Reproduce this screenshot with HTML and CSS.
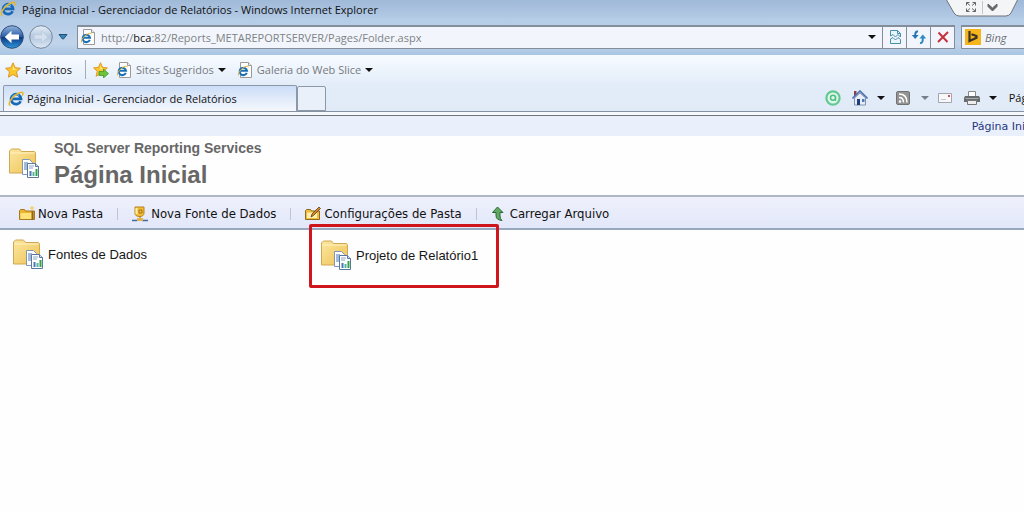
FILE: index.html
```html
<!DOCTYPE html>
<html lang="pt-BR">
<head>
<meta charset="utf-8">
<title>Página Inicial - Gerenciador de Relatórios</title>
<link rel="stylesheet" href="styles.css">
</head>
<body>
<svg class="defs" aria-hidden="true">
  <defs>
    <linearGradient id="gold" x1="0" y1="0" x2="1" y2="1"><stop offset="0" stop-color="#fbe7a0"/><stop offset="1" stop-color="#eec255"/></linearGradient>
    <linearGradient id="nav" x1="0" y1="0" x2="0" y2="1"><stop offset="0" stop-color="#93b5dd"/><stop offset=".48" stop-color="#2c5ea8"/><stop offset=".5" stop-color="#0b3580"/><stop offset="1" stop-color="#2f9ae0"/></linearGradient>
    <linearGradient id="navoff" x1="0" y1="0" x2="0" y2="1"><stop offset="0" stop-color="#e6eef8"/><stop offset=".5" stop-color="#b5c8df"/><stop offset="1" stop-color="#dce9f6"/></linearGradient>
    <symbol id="ie" viewBox="0 0 16 16">
      <path d="M12.6 10.2A5 5 0 1 1 13 7.8H4.6" fill="none" stroke="#1769b8" stroke-width="2.8"/>
      <path d="M4 6.4A4.7 4.7 0 0 1 11 4.6" fill="none" stroke="#56b4ea" stroke-width="1.2"/>
      <path d="M2.4 14.6C-.4 13.6 2.4 8 7 4.400C11 1.200 15 .2 15 2.600c0 .8-.3 1.400-.7 2" fill="none" stroke="#e9b526" stroke-width="1.500"/>
    </symbol>
    <symbol id="iepage" viewBox="0 0 16 16">
      <path d="M3.500 .5h8l3 3v12h-11z" fill="#fff" stroke="#9a9a96"/><path d="M11.500 .5v3h3" fill="#eee" stroke="#9a9a96"/>
      <path d="M9.800 10.800A3.700 3.700 0 1 1 10 8.700H4" fill="none" stroke="#1c70b5" stroke-width="2"/>
      <path d="M2 13.500C0 12.600 3 8 6 6c3-2 5.500-2.500 5.300-.7" fill="none" stroke="#dfb43a"/>
    </symbol>
    <symbol id="star" viewBox="0 0 16 16"><path d="M8 .8l2.200 4.900 5.200.6-3.900 3.500 1.200 5.400L8 12.500l-4.700 2.700 1.200-5.400L.6 6.300l5.200-.6z" fill="#fcc62d" stroke="#dc9625"/><path d="M8 3.500l1.200 3.300 3 .3-4.200 1z" fill="#ffef9a"/></symbol>
    <symbol id="caret" viewBox="0 0 8 4"><path d="M0 0h8L4 4z" fill="currentColor"/></symbol>
    <symbol id="folder" viewBox="0 0 34 32">
      <path d="M2.500 26V4l2-2h8l2 2.500h13l1 1.500v20z" fill="url(#gold)" stroke="#d1a852"/>
      <path d="M3.500 6h24" stroke="#fff3c4"/>
      <path d="M15.500 12.500h7l3 3v12h-10z" fill="#fff" stroke="#8195b4"/><path d="M17 16h4m-4 2h3m-3 2h3m-3 2h3" stroke="#4879b5"/>
      <path d="M20.500 16.500h8l3 3v11h-11z" fill="#fff" stroke="#59779f"/><path d="M28.500 16.500v3h3" fill="#c9d8ed" stroke="#59779f"/><path d="M22 19h5m-5 2h4" stroke="#8ba6cc"/>
      <path d="M23.500 29v-5" stroke="#4879b5" stroke-width="2"/><path d="M26.500 29v-4" stroke="#55b4a0" stroke-width="2"/><path d="M29.500 29v-7" stroke="#32a34b" stroke-width="2"/>
    </symbol>
  </defs>
</svg>

<header class="browser">
  <div class="titlebar">
    <svg class="i16"><use href="#ie"/></svg>
    <span>Página Inicial - Gerenciador de Relatórios - Windows Internet Explorer</span>
    <div class="session">
      <svg viewBox="0 0 72 17"><path d="M0-1h72L65 13q-2 3-5 3H13q-3 0-5-3z" fill="#f4f5f6" stroke="#6f747b"/><path d="M36.500 1v13" stroke="#c3c6ca"/>
      <path d="M20.500 5.500V2.500H23.500M20.500 2.500l3.500 3M29.500 5.500V2.500H26.500M29.500 2.500l-3.500 3M20.500 8.500v3H23.500M20.500 11.500l3.500-3M29.500 8.500v3H26.500M29.500 11.500l-3.500-3" fill="none" stroke="#666"/>
      <path d="M42 4l4.500 4L51 4v2.500L46.500 11 42 6.500z" fill="#666" stroke="#666"/></svg>
    </div>
  </div>

  <div class="navrow">
    <button class="round" aria-label="Voltar"><svg viewBox="0 0 24 24"><circle cx="12" cy="12" r="11.300" fill="url(#nav)" stroke="#324c74"/><path d="M4.800 12l6.700-6.300v3.900H19v4.800h-7.500v3.900z" fill="#fff"/></svg></button>
    <button class="round" aria-label="Avançar"><svg viewBox="0 0 24 24"><circle cx="12" cy="12" r="11.300" fill="url(#navoff)" stroke="#76869c"/><path d="M19 12l-6.500-6v3.800H5v4.400h7.500V18z" fill="#d5e0ee" stroke="#b4c4d8" stroke-width=".6"/></svg></button>
    <button class="recent" aria-label="Páginas recentes"><svg viewBox="0 0 10 6"><path d="M1 .5h8L5.500 5h-1z" fill="#3289b8" stroke="#244d78"/></svg></button>
    <div class="address">
      <svg class="i16"><use href="#iepage"/></svg>
      <div class="url">http://<b>bca</b>:82/Reports_METAREPORTSERVER/Pages/Folder.aspx</div>
      <button class="drop" aria-label="Endereços"><svg class="caret"><use href="#caret"/></svg></button>
      <button class="tool" aria-label="Modo de compatibilidade"><svg class="i16" viewBox="0 0 16 16"><path d="M3.500 7V1.500h7l3 3V8L11 5.500 8.500 8 6 5.500zM3.500 10L6 8.500 8.500 11l2.500-2.500 2.500 2v4h-10z" fill="#e8f5fb" stroke="#498eae"/><path d="M10.500 1.500v3h3" fill="none" stroke="#498eae"/></svg></button>
      <button class="tool" aria-label="Atualizar"><svg class="i16" viewBox="0 0 16 16"><path d="M7 2.500Q4 2 4.200 7" fill="none" stroke="#2377b7" stroke-width="2"/><path d="M.8 6h6.800L4.200 10z" fill="#2377b7"/><path d="M9 14q3 .5 2.800-5" fill="none" stroke="#2d8ac6" stroke-width="2"/><path d="M8.400 9.500h6.800L11.800 5.500z" fill="#2d8ac6"/></svg></button>
      <button class="tool" aria-label="Parar"><svg class="i16" viewBox="0 0 16 16"><path d="M3.500 3.500l9 9.500M13 3L3 13" stroke="#c6323c" stroke-width="2"/></svg></button>
    </div>
    <div class="search">
      <svg class="i16" viewBox="0 0 16 16"><path d="M0 0h16v16H0z" fill="#f6b51c"/><path d="M4.500 2v10l7-3.200V7L6.500 5.300" fill="none" stroke="#3a3223" stroke-width="2.200"/></svg>
      <input aria-label="Pesquisar" placeholder="Bing">
    </div>
  </div>

  <nav class="favorites">
    <button class="fav"><svg class="i16"><use href="#star"/></svg>Favoritos</button>
    <button class="addfav" aria-label="Adicionar a Favoritos"><svg class="i16" viewBox="0 0 16 16"><use href="#star" width="15" height="15"/><path d="M6 9.500h4.500V7l5 4.500-5 4.500v-2.500H6z" fill="#6bc43c" stroke="#3c8c2c" stroke-width=".7"/></svg></button>
    <button class="muted"><svg class="i16"><use href="#iepage"/></svg>Sites Sugeridos<svg class="caret"><use href="#caret"/></svg></button>
    <button class="muted"><svg class="i16"><use href="#iepage"/></svg>Galeria do Web Slice<svg class="caret"><use href="#caret"/></svg></button>
  </nav>

  <div class="tabrow">
    <button class="tab"><svg class="i16"><use href="#ie"/></svg>Página Inicial - Gerenciador de Relatórios</button>
    <button class="newtab" aria-label="Nova guia"></button>
    <div class="commands">
      <button aria-label="Complemento"><svg class="i16" viewBox="0 0 16 16"><circle cx="8" cy="8" r="6.600" fill="#e1f6ec" stroke="#62ca91" stroke-width="2.200"/><circle cx="8" cy="7.800" r="2.500" fill="none" stroke="#4fc182" stroke-width="1.500"/><path d="M10.500 6v5" stroke="#4fc182" stroke-width="1.300"/></svg></button>
      <button class="home" aria-label="Página inicial"><svg class="i16" viewBox="0 0 16 16"><path d="M2.500 8v7h11V8L8 3z" fill="#e9edf5" stroke="#8392b0"/><path d="M2 1h2.500v4L2 7z" fill="#8b3e4a"/><path d="M.5 8.500L8 1l7.500 7.500" fill="none" stroke="#4d70ae" stroke-width="1.600"/><path d="M5 9h3v6H5z" fill="#203f7b"/><path d="M10 9h2.500v3H10z" fill="#4b79bb"/></svg><svg class="caret"><use href="#caret"/></svg></button>
      <button class="feed" aria-label="Feeds"><svg class="i16" viewBox="0 0 16 16"><rect x="1.500" y="1.500" width="13" height="13" rx="1.500" fill="#939393" stroke="#727272"/><circle cx="5" cy="11.500" r="1.200" fill="#fff"/><path d="M4 7.500q4.500 0 4.500 5M4 4q8 0 8 8.500" fill="none" stroke="#fff" stroke-width="1.500"/></svg><svg class="caret dim"><use href="#caret"/></svg></button>
      <button aria-label="Ler email"><svg class="i16" viewBox="0 0 16 16"><path d="M1.500 3.500h13v9h-13z" fill="#f8f8f9" stroke="#a3a4ae"/><path d="M11 5h2v2h-2z" fill="#c85464"/><path d="M4 9.500h5" stroke="#c5c6d0"/></svg></button>
      <button class="print" aria-label="Imprimir"><svg class="i16" viewBox="0 0 16 16"><path d="M4.500 1.500h7v5h-7z" fill="#fff" stroke="#888"/><path d="M1 6h14l1 2v4H0V8z" fill="#686b6e"/><path d="M1.500 8.500h13" stroke="#a8acaf"/><path d="M3.500 10.500h9v4h-9z" fill="#eee" stroke="#777"/></svg><svg class="caret"><use href="#caret"/></svg></button>
      <button class="page">Página</button>
    </div>
  </div>
</header>

<main>
  <div class="topband"><a href="#">Página Inicial</a></div>
  <div class="heading">
    <svg class="folder"><use href="#folder"/></svg>
    <div><p>SQL Server Reporting Services</p><h1>Página Inicial</h1></div>
  </div>
  <div class="toolbar">
    <button><svg class="i16" viewBox="0 0 16 16"><path d="M.5 13.500v-9l1-1h4l1 1.500h9v8.500z" fill="#edb52d" stroke="#a67922"/><path d="M1.500 7h12v6h-12z" fill="#ffe379"/><path d="M13.500 5v9" stroke="#8f681d" stroke-width="2"/><path d="M11 2h4M13 0v4" stroke="#f7c83d"/></svg>Nova Pasta</button>
    <button><svg class="i16" viewBox="0 0 16 16"><path d="M3 1h9v6q0 3.500-4.500 3.500T3 7z" fill="#f0bd35" stroke="#bc8120"/><path d="M4.500 2v6" stroke="#fff0a1" stroke-width="2"/><path d="M7 4h3v3H7zM8 10v4" fill="none" stroke="#a2711b"/><path d="M0 14.500h5m5 0h6" stroke="#4467a5" stroke-width="1.500"/><path d="M5 12h6v3H5z" fill="#e2b345"/></svg>Nova Fonte de Dados</button>
    <button><svg class="i16" viewBox="0 0 16 16"><path d="M.5 13.500v-9l1-1h4l1 1.500h8v8.500z" fill="#f0bc3c" stroke="#8c6a21"/><path d="M2 6.500h10v5.500H2z" fill="#fff0b0"/><path d="M6 11l1-3 7-7 1.500 1.500-7 7z" fill="#d98327" stroke="#574221" stroke-width=".8"/></svg>Configurações de Pasta</button>
    <button><svg class="i16" viewBox="0 0 16 16"><path d="M6.500 1L12 6.500H9V10q0 3 2 4.500Q5 14 5 9.500v-3H1.500z" fill="#61a963" stroke="#2a6937"/></svg>Carregar Arquivo</button>
  </div>
  <ul class="items">
    <li><a href="#"><svg class="folder"><use href="#folder"/></svg>Fontes de Dados</a></li>
    <li><a class="marked" href="#"><svg class="folder"><use href="#folder"/></svg>Projeto de Relatório1</a></li>
  </ul>
</main>
</body>
</html>
```

FILE: styles.css
```css
* { box-sizing: border-box; }
body { margin: 0; min-height: 100vh; background: #fefefe; overflow: hidden; font: 12px "Open Sans", "Noto Sans", sans-serif; color: #111; }
button { margin: 0; padding: 0; border: 0; background: none; font: inherit; color: inherit; display: flex; align-items: center; white-space: nowrap; }
svg { display: block; flex: none; }
.defs { position: absolute; width: 0; height: 0; }
.i16 { width: 16px; height: 16px; }
.caret { width: 8px; height: 4px; }

.browser { font-size: 11px; }
.titlebar { position: relative; display: flex; align-items: center; gap: 6px; height: 18px; background: linear-gradient(#9fb9d8, #b3cae5); }
.session { position: absolute; top: 0; right: 6px; width: 72px; height: 17px; }

.navrow { display: flex; align-items: center; height: 37px; background: linear-gradient(#b5cce7, #c0d4eb 70%, #a9c5e2); }
.round { width: 24px; height: 24px; margin-right: 5px; }
.round svg { width: 24px; height: 24px; }
.recent { width: 10px; margin-right: 9px; }
.recent svg { width: 10px; height: 6px; }
.address { flex: 1; display: flex; align-items: center; height: 24px; padding-left: 2px; background: #f2f6fc; border: 1px solid #848e9b; border-top-width: 2px; }
.url { flex: 1; margin-left: 5px; color: #808285; white-space: nowrap; }
.url b { font-weight: 400; color: #111; }
.drop { width: 20px; height: 100%; justify-content: center; }
.tool { width: 24px; height: 100%; justify-content: center; border-left: 1px solid #848e9b; }
.search { display: flex; align-items: center; width: 63px; height: 24px; margin-left: 6px; padding-left: 3px; gap: 4px; background: #f2f6fc; border: 1px solid #848e9b; border-top-width: 2px; border-right: 0; }
.search input { flex: 1; min-width: 0; padding: 0; border: 0; outline: 0; background: none; font: inherit; font-style: italic; }
.search input::placeholder { color: #6b6e72; opacity: 1; }

.favorites { display: flex; align-items: center; height: 29px; padding-left: 5px; background: linear-gradient(#f7fbff, #e3edf9); }
.fav { gap: 4px; height: 19px; padding-right: 13px; border-right: 1px solid #a3adba; }
.addfav { margin: 0 7px; }
.muted { gap: 4px; margin-right: 11px; color: #777a7e; }
.muted .caret { color: #111; }

.tabrow { display: flex; align-items: flex-end; height: 32px; padding: 0 0 4px 3px; background: linear-gradient(#e3edf9, #e1ebf8 27px, #8491a3 27px, #8491a3 28px, #f5f8fc 28px); border-bottom: 1px solid #6d747c; }
.tab { width: 294px; height: 26px; padding-left: 4px; gap: 3px; background: linear-gradient(#cbddf7, #f5f8fc); border: 1px solid #8c98a8; border-bottom: 0; border-radius: 2px 2px 0 0; }
.newtab { width: 29px; height: 25px; background: #e9f0fa; border: 1px solid #8c98a8; border-radius: 2px 2px 0 0; }
.commands { flex: 1; min-width: 0; display: flex; justify-content: flex-end; height: 27px; margin-right: -19px; }
.home { margin-left: 11px; gap: 9px; }
.feed { margin: 0 8px 0 10px; gap: 10px; }
.print { margin: 0 12px 0 11px; gap: 9px; }
.dim { color: #777f8b; }

main { font-family: "DejaVu Sans Condensed", "DejaVu Sans", sans-serif; }
.topband { display: flex; justify-content: flex-end; height: 20px; margin-right: -20px; padding: 2px 0; background: #e9f0fb; }
a { text-decoration: none; color: #26367f; }
.topband a { font: 11px/18px "DejaVu Sans", sans-serif; }
.heading { display: flex; gap: 13px; height: 59px; padding: 3px 0 0 7px; color: #676767; font-family: "Liberation Sans", Arial, sans-serif; }
.folder { width: 34px; height: 32px; }
.heading .folder { margin-top: 8px; }
.heading p { margin: 0; font-size: 14px; line-height: 18px; font-weight: 700; }
.heading h1 { margin: 2px 0 0; font-size: 24px; line-height: 32px; }
.toolbar { display: flex; align-items: center; height: 35px; padding: 2px 0 0 19px; background: linear-gradient(#eef1fc, #e2e7f9); border-top: 2px solid #b0b8c5; border-bottom: 2px solid #98a8be; font-size: 13px; }
.toolbar button { gap: 3px; }
.toolbar button + button::before { content: ""; width: 1px; height: 12px; margin: 0 11px 0 14px; background: #bec4d2; }
.items { display: flex; margin: 0; padding: 0 0 0 11px; list-style: none; font: 13px "Liberation Sans", Arial, sans-serif; }
.items li { width: 298px; padding-top: 8px; }
.items a { display: flex; align-items: center; gap: 3px; color: #161616; }
.items .marked { width: 190px; height: 64px; margin-top: -14px; padding: 0 0 2px 7px; border: 3px solid #d0161d; border-radius: 2px; position: relative; }
```
